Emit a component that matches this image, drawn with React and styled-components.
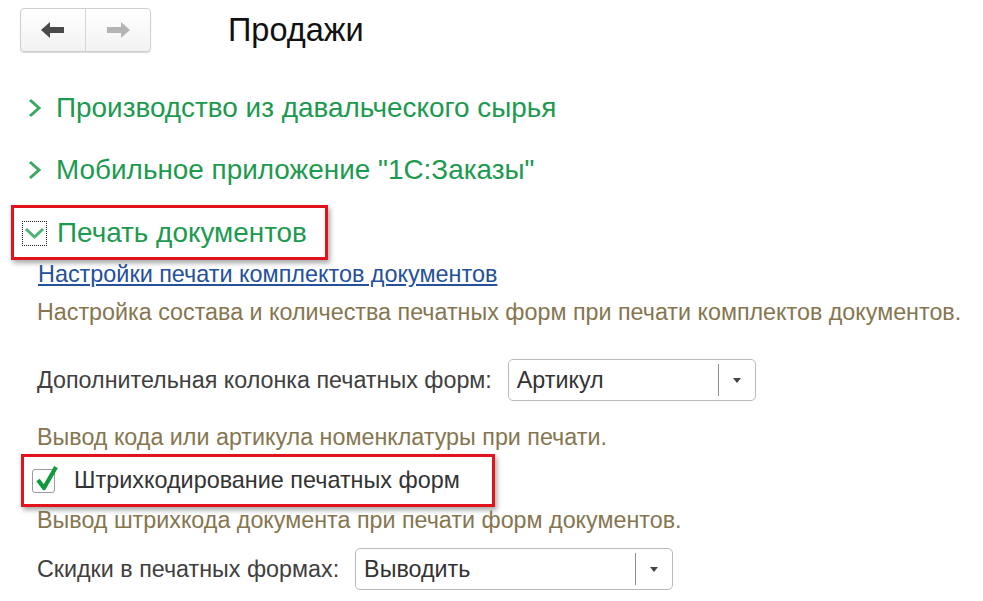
import styled, { createGlobalStyle } from 'styled-components'

const Global = createGlobalStyle`
  html, body {
    margin: 0;
    padding: 0;
    background: #fff;
  }
  body {
    font-family: "Liberation Sans", Arial, sans-serif;
    color: #404040;
  }
`

const Page = styled.div`
  width: 983px;
  height: 601px;
  overflow: hidden;
  padding: 8px 0 0 0;
  box-sizing: border-box;
`

const Header = styled.div`
  display: flex;
  align-items: center;
  padding-left: 20px;
  height: 44px;
`

const NavGroup = styled.div`
  display: flex;
  width: 131px;
  height: 44px;
  box-sizing: border-box;
  border: 1px solid #cfcfcf;
  border-radius: 4px;
  background: linear-gradient(#ffffff, #f2f2f2);
  box-shadow: 0 1px 1px rgba(0, 0, 0, 0.15);
`

const NavButton = styled.div`
  flex: 1;
  display: flex;
  align-items: center;
  justify-content: center;
  & + & {
    border-left: 1px solid #d6d6d6;
  }
`

const Title = styled.h1`
  margin: 0 0 0 77px;
  font-weight: normal;
  font-size: 32.5px;
  color: #111;
`

const Group = styled.div`
  display: flex;
  align-items: center;
  gap: 13px;
  height: 36px;
  margin-top: ${p => p.$top}px;
  margin-left: 27px;
`

const GroupTitle = styled.span`
  font-size: 27.9px;
  color: #1c9a4f;
`

const Highlight = styled.div`
  display: inline-flex;
  align-items: center;
  margin: ${p => p.$margin};
  padding: ${p => p.$padding};
  border: 3px solid #e3131c;
  box-shadow: 2px 3px 5px rgba(0, 0, 0, 0.35);
  align-self: flex-start;
`

const Focus = styled.div`
  display: flex;
  align-items: center;
  justify-content: center;
  width: 25px;
  height: 25px;
  box-sizing: border-box;
  border: 1px dotted #222;
  margin-right: 10px;
`

const Body = styled.div`
  display: flex;
  flex-direction: column;
  padding-left: 37px;
`

const Link = styled.a`
  font-size: 23.4px;
  color: #24509c;
  text-decoration: underline;
  margin: ${p => p.$margin};
  align-self: flex-start;
`

const Hint = styled.div`
  font-size: 23.3px;
  color: #857650;
  margin-top: ${p => p.$top}px;
`

const Field = styled.div`
  display: flex;
  align-items: center;
  gap: 16px;
  margin-top: ${p => p.$top}px;
`

const Label = styled.span`
  font-size: 23.3px;
  color: #404040;
`

const Select = styled.div`
  display: flex;
  align-items: center;
  width: ${p => p.$width}px;
  height: 42px;
  box-sizing: border-box;
  border: 1px solid #b9b9b9;
  border-radius: 5px;
  background: #fff;
`

const SelectValue = styled.span`
  flex: 1;
  padding-left: 8px;
  font-size: 23.3px;
  color: #333;
`

const SelectButton = styled.div`
  width: 36px;
  height: 32px;
  border-left: 1px solid #8c8c8c;
  display: flex;
  align-items: center;
  justify-content: center;
  &::after {
    content: '';
    border-left: 4px solid transparent;
    border-right: 4px solid transparent;
    border-top: 5px solid #444;
  }
`

const CheckRow = styled.label`
  display: flex;
  align-items: center;
  gap: 19px;
`

const CheckBox = styled.span`
  position: relative;
  width: 23px;
  height: 24px;
  box-sizing: border-box;
  border: 1px solid #9a9a9a;
  border-radius: 3px;
  background: #fff;
  svg {
    position: absolute;
    left: 2px;
    top: -6px;
  }
`

const CheckText = styled.span`
  font-size: 23.4px;
  color: #333;
`

const Chevron = () => (
  <svg width="16" height="22" viewBox="0 0 16 22">
    <path d="M3 3 L12 11 L3 19" fill="none" stroke="#3aa865" strokeWidth="3" />
  </svg>
)

const ArrowLeft = () => (
  <svg width="26" height="18" viewBox="0 0 26 18">
    <path d="M1 9 L10 1 L10 6 L24 6 L24 12 L10 12 L10 17 Z" fill="#4a4a4a" />
  </svg>
)

const ArrowRight = () => (
  <svg width="26" height="18" viewBox="0 0 26 18">
    <path d="M25 9 L16 1 L16 6 L2 6 L2 12 L16 12 L16 17 Z" fill="#b4b4b4" />
  </svg>
)

export default function App() {
  return (
    <Page>
      <Global />
      <Header>
        <NavGroup>
          <NavButton><ArrowLeft /></NavButton>
          <NavButton><ArrowRight /></NavButton>
        </NavGroup>
        <Title>Продажи</Title>
      </Header>

      <Group $top={38}>
        <Chevron />
        <GroupTitle>Производство из давальческого сырья</GroupTitle>
      </Group>
      <Group $top={26}>
        <Chevron />
        <GroupTitle>Мобильное приложение "1С:Заказы"</GroupTitle>
      </Group>

      <Highlight $margin="17px 0 0 11px" $padding="9px 18px 8px 8px">
        <Focus>
          <svg width="21" height="14" viewBox="0 0 21 14">
            <path d="M2 3 L10.5 11 L19 3" fill="none" stroke="#4db377" strokeWidth="3" />
          </svg>
        </Focus>
        <GroupTitle>Печать документов</GroupTitle>
      </Highlight>

      <Body>
        <Link $margin="1px 0 0 1px">Настройки печати комплектов документов</Link>
        <Hint $top={11}>Настройка состава и количества печатных форм при печати комплектов документов.</Hint>
        <Field $top={33}>
          <Label>Дополнительная колонка печатных форм:</Label>
          <Select $width={248}>
            <SelectValue>Артикул</SelectValue>
            <SelectButton />
          </Select>
        </Field>
        <Hint $top={23}>Вывод кода или артикула номенклатуры при печати.</Hint>
      </Body>

      <Highlight $margin="3px 0 0 21px" $padding="10px 32px 10px 8px">
        <CheckRow>
          <CheckBox>
            <svg width="24" height="28" viewBox="0 0 24 28">
              <path d="M3 16 L9 24 L21 3" fill="none" stroke="#0f9a3e" strokeWidth="4.2" strokeLinejoin="round" />
            </svg>
          </CheckBox>
          <CheckText>Штрихкодирование печатных форм</CheckText>
        </CheckRow>
      </Highlight>

      <Body>
        <Hint $top={0}>Вывод штрихкода документа при печати форм документов.</Hint>
        <Field $top={14}>
          <Label>Скидки в печатных формах:</Label>
          <Select $width={318}>
            <SelectValue>Выводить</SelectValue>
            <SelectButton />
          </Select>
        </Field>
      </Body>
    </Page>
  )
}
